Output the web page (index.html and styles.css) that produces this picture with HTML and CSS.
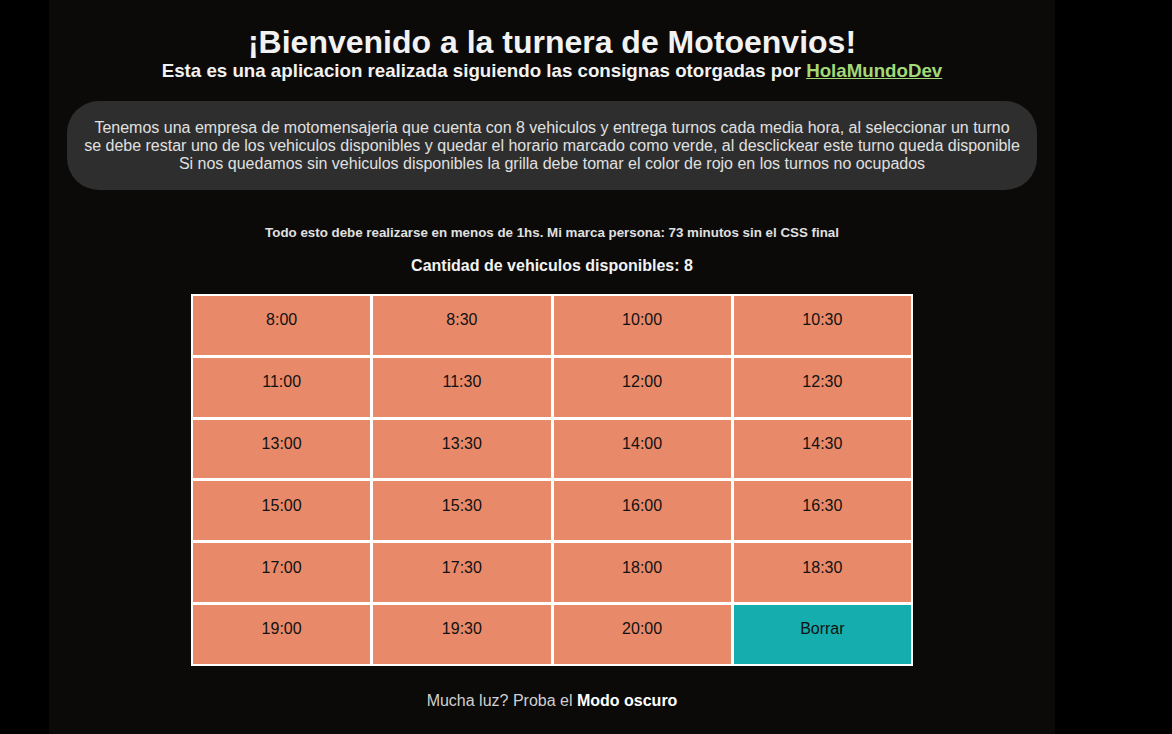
FILE: index.html
```html
<!DOCTYPE html>
<html lang="es">
<head>
<meta charset="utf-8">
<title>Turnera Motoenvios</title>
<link rel="stylesheet" href="styles.css">
</head>
<body>
<main class="app">
  <header class="head">
    <h1 class="title">¡Bienvenido a la turnera de Motoenvios!</h1>
    <h2 class="subtitle">Esta es una aplicacion realizada siguiendo las consignas otorgadas por <a class="link" href="#">HolaMundoDev</a></h2>
  </header>
  <section class="info">
    <p>Tenemos una empresa de motomensajeria que cuenta con 8 vehiculos y entrega turnos cada media hora, al seleccionar un turno<br>se debe restar uno de los vehiculos disponibles y quedar el horario marcado como verde, al desclickear este turno queda disponible<br>Si nos quedamos sin vehiculos disponibles la grilla debe tomar el color de rojo en los turnos no ocupados</p>
  </section>
  <p class="note">Todo esto debe realizarse en menos de 1hs. Mi marca persona: 73 minutos sin el CSS final</p>
  <p class="count">Cantidad de vehiculos disponibles: 8</p>
  <div class="grid">
    <div class="cell">8:00</div>
    <div class="cell">8:30</div>
    <div class="cell">10:00</div>
    <div class="cell">10:30</div>
    <div class="cell">11:00</div>
    <div class="cell">11:30</div>
    <div class="cell">12:00</div>
    <div class="cell">12:30</div>
    <div class="cell">13:00</div>
    <div class="cell">13:30</div>
    <div class="cell">14:00</div>
    <div class="cell">14:30</div>
    <div class="cell">15:00</div>
    <div class="cell">15:30</div>
    <div class="cell">16:00</div>
    <div class="cell">16:30</div>
    <div class="cell">17:00</div>
    <div class="cell">17:30</div>
    <div class="cell">18:00</div>
    <div class="cell">18:30</div>
    <div class="cell">19:00</div>
    <div class="cell">19:30</div>
    <div class="cell">20:00</div>
    <div class="cell cell-clear">Borrar</div>
  </div>
  <p class="footer">Mucha luz? Proba el <strong>Modo oscuro</strong></p>
</main>
</body>
</html>
```
FILE: styles.css
```css
html, body {
  margin: 0;
  padding: 0;
  background: #000;
  height: 100%;
}
body {
  font-family: "Liberation Sans", Arial, sans-serif;
  overflow: hidden;
}
.app {
  width: 1006px;
  min-height: 734px;
  margin-left: 49px;
  background: #0b0a09;
  color: #fff;
  text-align: center;
  display: flex;
  flex-direction: column;
  align-items: center;
}
.head {
  padding-top: 25px;
}
.title {
  margin: 0;
  font-size: 32px;
  line-height: 34px;
  font-weight: bold;
  color: #f2f2f2;
}
.subtitle {
  margin: 0;
  font-size: 18.72px;
  line-height: 24px;
  font-weight: bold;
  color: #f2f2f2;
}
.link {
  color: #a3d977;
}
.info {
  align-self: stretch;
  margin: 18px 18px 0;
  background: #2e2e2e;
  border-radius: 32px;
  padding: 18px 10px 17px;
}
.info p {
  margin: 0;
  font-size: 16px;
  line-height: 18px;
  color: #e0e0e0;
}
.note {
  margin: 35px 0 0;
  font-size: 13.33px;
  line-height: 15px;
  font-weight: bold;
  color: #e0e0e0;
}
.count {
  margin: 17px 0 0;
  font-size: 16px;
  line-height: 18px;
  font-weight: bold;
  color: #f2f2f2;
}
.grid {
  margin-top: 19px;
  width: 722px;
  box-sizing: border-box;
  background: #fff;
  padding: 2px;
  display: grid;
  grid-template-columns: repeat(4, 1fr);
  grid-auto-rows: 58.8px;
  gap: 3px;
}
.cell {
  background: #e88a69;
  color: #111;
  font-size: 16px;
  display: flex;
  align-items: center;
  justify-content: center;
  padding-bottom: 10px;
  box-sizing: border-box;
}
.cell-clear {
  background: #15adad;
}
.footer {
  margin: 26px 0 0;
  font-size: 16px;
  line-height: 18px;
  color: #d0d0d0;
}
.footer strong {
  color: #fff;
}
```
